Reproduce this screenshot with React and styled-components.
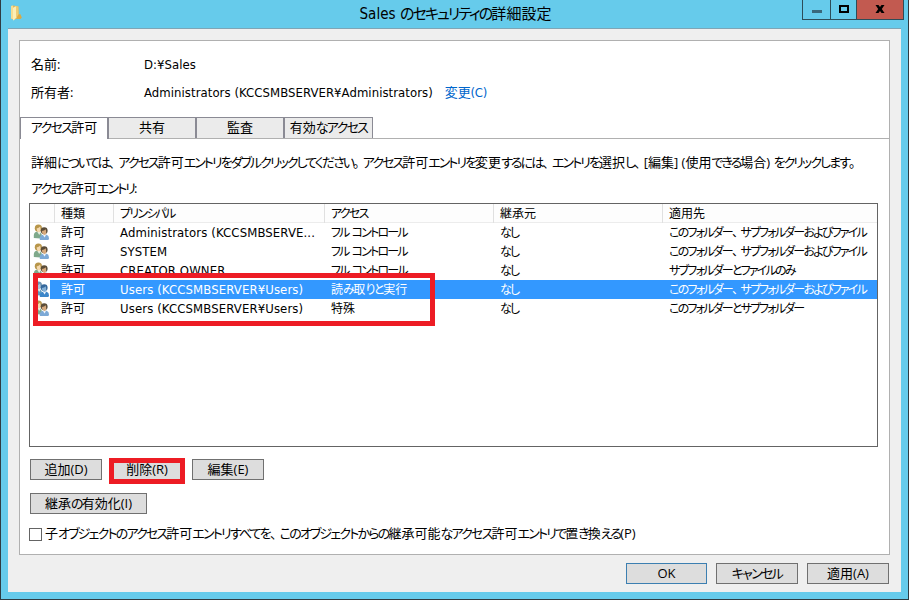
import React from 'react';
import styled, { createGlobalStyle, css } from 'styled-components';

const GlobalStyle = createGlobalStyle`
  * {
    box-sizing: border-box;
  }
  body {
    margin: 0;
    background: #fff;
    color: #000;
    font-family: 'Open Sans', 'Noto Sans CJK JP', sans-serif;
    font-size: 13px;
    line-height: 19px;
  }
`;

const latin = css`
  font-family: 'DejaVu Sans Condensed', 'Noto Sans CJK JP', sans-serif;
  letter-spacing: 0.06px;
`;

const Window = styled.div`
  width: 909px;
  height: 600px;
  display: flex;
  flex-direction: column;
  padding: 0 7px 7px;
  background: #66cbeb;
  border: 1px solid #2f3c42;
  border-top: 0;
  overflow: hidden;
`;
const TitleBar = styled.header`
  flex: none;
  height: 28px;
  display: flex;
  align-items: flex-start;
  justify-content: space-between;
`;
const FolderSlot = styled.div`
  width: 101px;
  padding: 5px 0 0 1px;
`;
const Title = styled.h1`
  ${latin}
  margin: 0;
  padding-top: 4px;
  font-size: 15px;
  font-weight: 400;
  line-height: 20px;
`;
const Controls = styled.div`
  display: flex;
  height: 20px;
  border: 1px solid #2d4d59;
  border-top: 0;
  margin-right: -3px;
`;
const Control = styled.button`
  width: ${(p) => p.$width}px;
  display: flex;
  justify-content: center;
  align-items: flex-start;
  padding: 0;
  border: 0;
  border-right: ${(p) => (p.$close ? '0' : '1px solid #2d4d59')};
  background: ${(p) => (p.$close ? '#c25a50' : 'transparent')};
`;

const Body = styled.main`
  flex: 1;
  display: flex;
  flex-direction: column;
  padding: 11px 11px 8px;
  border-top: 1px solid #7fa5b5;
  background: #efefef;
`;
const Panel = styled.section`
  height: 515px;
  display: flex;
  flex-direction: column;
  padding-top: 9px;
  background: #fff;
  border: 1px solid #b0b0b0;
`;
const Field = styled.div`
  height: 28px;
  display: flex;
  align-items: center;
  padding-left: 11px;
`;
const FieldName = styled.span`
  width: 113px;
`;
const FieldValue = styled.span`
  ${latin}
`;
const Link = styled.a`
  ${latin}
  margin-left: 12px;
  color: #0066cc;
  letter-spacing: -0.2px;
`;

const Tabs = styled.nav`
  flex: none;
  display: flex;
  height: 22px;
  margin-top: 11px;
  border-bottom: 1px solid #b0b0b0;
`;
const Tab = styled.button`
  width: ${(p) => p.$width}px;
  height: ${(p) => (p.$active ? 22 : 21)}px;
  padding: 0 0 ${(p) => (p.$active ? 3 : 2)}px;
  font: inherit;
  line-height: 18px;
  text-align: center;
  white-space: nowrap;
  color: #000;
  background: ${(p) => (p.$active ? '#fff' : '#ebebeb')};
  border: solid #8a8a94;
  border-width: 1px ${(p) => (p.$last ? 1 : 2)}px 0 ${(p) => (p.$active ? 1 : 0)}px;
`;

const Page = styled.div`
  flex: 1;
  display: flex;
  flex-direction: column;
  padding: 14px 11px 0 9px;
`;
const Note = styled.p`
  margin: 0 0 7px 2px;
  white-space: pre;
`;
const ListBox = styled.div`
  position: relative;
  flex: none;
  height: 244px;
  margin-top: -2px;
  border: 1px solid #646464;
  background: #fff;
`;
const columns = '25px 59px 211px 169px 169px 1fr';
const HeadRow = styled.div`
  display: grid;
  grid-template-columns: ${columns};
  height: 19px;
  background: #fdfdfd;
  border-bottom: 1px solid #ececec;
  font-size: 12px;
  line-height: 19px;
`;
const HeadCell = styled.div`
  padding-left: 6px;
  border-right: 1px solid #e0e0e0;
  white-space: pre;
  &:last-child {
    border-right: 0;
  }
`;
const Row = styled.div`
  display: grid;
  grid-template-columns: ${columns};
  height: 19px;
  font-size: 12px;
  color: ${(p) => (p.$selected ? '#fff' : '#000')};
  background: ${(p) =>
    p.$selected ? 'linear-gradient(90deg, #fff 20px, #3398ff 20px)' : 'none'};
`;
const Cell = styled.div`
  padding-left: 6px;
  white-space: pre;
`;
const IconCell = styled.div`
  display: flex;
  padding: 1px 0 0 3px;
`;
const Principal = styled(Cell)`
  ${latin}
  font-size: 13px;
  letter-spacing: 0.12px;
`;
const Mark = styled.div`
  position: absolute;
  left: ${(p) => p.$left}px;
  top: ${(p) => p.$top}px;
  width: ${(p) => p.$width}px;
  height: ${(p) => p.$height}px;
  border: 5px solid #ed1c24;
  pointer-events: none;
`;

const Buttons = styled.div`
  display: flex;
  gap: 9px;
  margin: ${(p) => p.$top}px 0 0 1px;
`;
const ButtonSlot = styled.div`
  position: relative;
`;
const Button = styled.button`
  display: block;
  width: ${(p) => p.$width}px;
  height: 21px;
  padding: 0;
  font: inherit;
  font-size: 13px;
  line-height: 19px;
  text-align: center;
  white-space: nowrap;
  color: #000;
  background: #ddd;
  border: 1px solid ${(p) => (p.$primary ? '#3c7fb1' : '#707070')};
`;
const CheckLabel = styled.label`
  display: flex;
  align-items: center;
  gap: 3px;
  margin-top: 10px;
  white-space: nowrap;
`;
const CheckBox = styled.span`
  width: 13px;
  height: 13px;
  margin-top: 2px;
  border: 1px solid #646464;
  background: #fff;
`;
const Footer = styled.footer`
  display: flex;
  justify-content: flex-end;
  gap: 9px;
  padding-top: 8px;
  margin-right: 1px;
`;

const Kana = styled.span`
  font-feature-settings: 'palt';
  letter-spacing: ${(p) => p.$tight}px;
`;
const Stop = styled.span`
  letter-spacing: -3.3px;
`;

// Kana is set narrower than kanji, commas and full stops keep most of their width.
function Jp({ children, tight = -1.7 }) {
  return children.split(/([ぁ-ゖァ-ヺー]+|[、。])/).map((run, i) => {
    if (i % 2 === 0) return run;
    if (/[、。]/.test(run)) return <Stop key={i}>{run}</Stop>;
    return (
      <Kana key={i} $tight={tight}>
        {run}
      </Kana>
    );
  });
}

function FolderIcon() {
  return (
    <svg width="14" height="16" viewBox="0 0 14 16">
      <path d="M2 1 4.6.4 9.4 1.4l.4 8.6v3.6L5 14.5 2 13.6z" fill="#e3b95a" />
      <path d="M2 1 4 .6v13.6L2 13.6z" fill="#f6dd92" />
      <path d="M4 2.8 7.4 1v11.6L4.6 15.4 4 15z" fill="#fbeeb6" />
      <path d="M7.4 1.2 9.4 1.6v8l-2 2.6z" fill="#efcb70" />
      <path d="M9.6 9.2h1.8l1.4 3.4-1.2 1.4-4.2-.2z" fill="#d9a945" />
    </svg>
  );
}

function UsersIcon({ selected }) {
  return (
    <svg width="17" height="17" viewBox="0 0 17 17">
      <path d="M.8 14V11q.3-2.8 3.2-3.2l3 .3 2 3L7.5 14.4z" fill={selected ? '#5d9ac0' : '#7fa98b'} />
      <path d="M4 7.5 6.3 11 7.6 8z" fill="#e9f1e4" />
      <circle cx="5.4" cy="4.2" r="3.6" fill={selected ? '#6b91b0' : '#b8964a'} />
      <path d="M3.6 4.4q2.4-.2 3.5-1.8 1.5 5-1.4 5.8Q3.6 7.6 3.6 4.4z" fill={selected ? '#a9c4db' : '#f4d8ae'} />
      <path d="M6.8 16v-2.5q.4-2.4 3-2.8l4 .1q2.3 1 2.3 4.2l-1 1z" fill={selected ? '#3c86c9' : '#7ca9d6'} />
      <path d="m9.8 10.8 1.8 2.7 1.5-2.7z" fill="#eef4fb" />
      <circle cx="11.2" cy="6.7" r="3.4" fill={selected ? '#34679b' : '#5a4c39'} />
      <path d="M8.9 6.9q2.5-.1 3.8-1.7 1.6 5-1.1 5.9Q8.9 10.2 8.9 6.9z" fill={selected ? '#84b0d6' : '#d6a97c'} />
    </svg>
  );
}

const tabs = [
  { label: 'アクセス許可', width: 89, active: true },
  { label: '共有', width: 88 },
  { label: '監査', width: 88 },
  { label: '有効なアクセス', width: 88, last: true },
];

const heads = ['', '種類', 'プリンシパル', 'アクセス', '継承元', '適用先'];

const entries = [
  {
    principal: 'Administrators (KCCSMBSERVE...',
    access: 'フル コントロール',
    target: 'このフォルダー、サブフォルダーおよびファイル',
  },
  {
    principal: 'SYSTEM',
    access: 'フル コントロール',
    target: 'このフォルダー、サブフォルダーおよびファイル',
  },
  {
    principal: 'CREATOR OWNER',
    access: 'フル コントロール',
    target: 'サブフォルダーとファイルのみ',
  },
  {
    principal: 'Users (KCCSMBSERVER¥Users)',
    access: '読み取りと実行',
    target: 'このフォルダー、サブフォルダーおよびファイル',
    selected: true,
  },
  {
    principal: 'Users (KCCSMBSERVER¥Users)',
    access: '特殊',
    target: 'このフォルダーとサブフォルダー',
  },
];

function App() {
  return (
    <>
      <GlobalStyle />
      <Window>
        <TitleBar>
          <FolderSlot>
            <FolderIcon />
          </FolderSlot>
          <Title>
            <Jp tight={-1.9}>Sales のセキュリティの詳細設定</Jp>
          </Title>
          <Controls>
            <Control $width={28}>
              <svg width="12" height="19" viewBox="0 0 12 19">
                <path d="M1 10h10v3H1z" fill="#39687b" />
              </svg>
            </Control>
            <Control $width={26}>
              <svg width="12" height="19" viewBox="0 0 12 19">
                <path d="M2 6h8v6H2z" fill="none" stroke="#000" strokeWidth="2" />
              </svg>
            </Control>
            <Control $width={46} $close>
              <svg width="12" height="19" viewBox="0 0 12 19">
                <path d="M1.5 5h3L6 7l1.5-2h3L7.8 9l2.7 4h-3L6 11l-1.5 2h-3l2.7-4z" fill="#000" />
              </svg>
            </Control>
          </Controls>
        </TitleBar>
        <Body>
          <Panel>
            <Field>
              <FieldName>名前:</FieldName>
              <FieldValue>D:¥Sales</FieldValue>
            </Field>
            <Field>
              <FieldName>所有者:</FieldName>
              <FieldValue>Administrators (KCCSMBSERVER¥Administrators)</FieldValue>
              <Link>変更(C)</Link>
            </Field>
            <Tabs>
              {tabs.map((t) => (
                <Tab key={t.label} $width={t.width} $active={t.active} $last={t.last}>
                  <Jp>{t.label}</Jp>
                </Tab>
              ))}
            </Tabs>
            <Page>
              <Note>
                <Jp tight={-1.95}>
                  詳細については、アクセス許可エントリをダブルクリックしてください。アクセス許可エントリを変更するには、エントリを選択し、[編集] (使用できる場合) をクリックします。
                </Jp>
              </Note>
              <Note>
                <Jp tight={-1.85}>アクセス許可エントリ:</Jp>
              </Note>
              <ListBox>
                <HeadRow>
                  {heads.map((h) => (
                    <HeadCell key={h}>
                      <Jp tight={-1.7}>{h}</Jp>
                    </HeadCell>
                  ))}
                </HeadRow>
                {entries.map((e, i) => (
                  <Row key={i} $selected={e.selected}>
                    <IconCell>
                      <UsersIcon selected={e.selected} />
                    </IconCell>
                    <Cell>許可</Cell>
                    <Principal>{e.principal}</Principal>
                    <Cell>
                      <Jp tight={e.selected ? -1.4 : -1.85}>{e.access}</Jp>
                    </Cell>
                    <Cell>
                      <Jp tight={-1.9}>なし</Jp>
                    </Cell>
                    <Cell>
                      <Jp tight={-1.78}>{e.target}</Jp>
                    </Cell>
                  </Row>
                ))}
                <Mark $left={3} $top={69} $width={402} $height={53} />
              </ListBox>
              <Buttons $top={12}>
                <Button $width={72}>追加(D)</Button>
                <ButtonSlot>
                  <Button $width={72}>削除(R)</Button>
                  <Mark $left={-2} $top={-1} $width={76} $height={26} />
                </ButtonSlot>
                <Button $width={72}>編集(E)</Button>
              </Buttons>
              <Buttons $top={13}>
                <Button $width={117}>
                  <Jp>継承の有効化(I)</Jp>
                </Button>
              </Buttons>
              <CheckLabel>
                <CheckBox />
                <span>
                  <Jp tight={-1.8}>
                    子オブジェクトのアクセス許可エントリすべてを、このオブジェクトからの継承可能なアクセス許可エントリで置き換える(P)
                  </Jp>
                </span>
              </CheckLabel>
            </Page>
          </Panel>
          <Footer>
            <Button $width={81} $primary>
              OK
            </Button>
            <Button $width={82}>
              <Jp>キャンセル</Jp>
            </Button>
            <Button $width={82}>適用(A)</Button>
          </Footer>
        </Body>
      </Window>
    </>
  );
}

export default App;
